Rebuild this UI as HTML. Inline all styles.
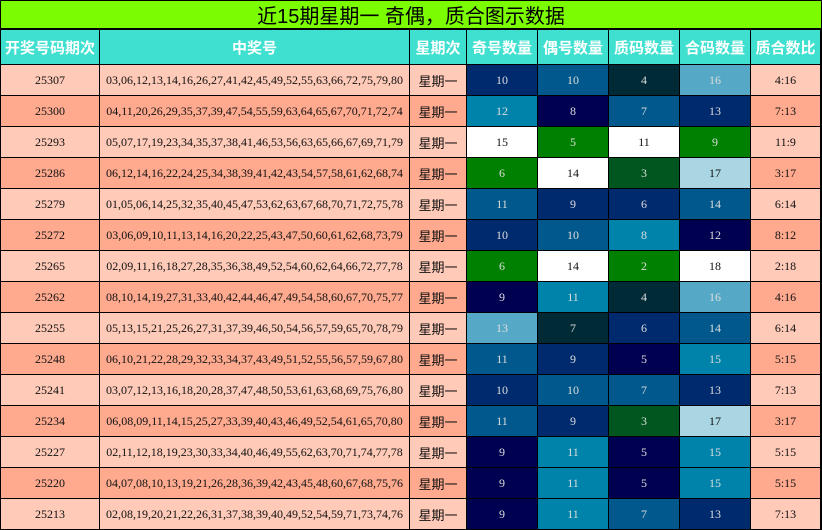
<!DOCTYPE html><html><head><meta charset="utf-8"><style>
body{margin:0;width:822px;height:530px;background:#000;position:relative;overflow:hidden;font-family:"Liberation Serif","Noto Serif CJK SC",serif}
.c{position:absolute;display:flex;align-items:center;justify-content:center;font-size:12px;color:#111;box-sizing:border-box}
.t{background:#7cfc00;font-family:"Liberation Sans","Noto Sans CJK SC",sans-serif;font-size:20px;color:#000}
.h{background:#40e0d0;color:#fff;font-family:"Liberation Sans","Noto Sans CJK SC",sans-serif;font-size:15px;font-weight:bold}
.wk{font-family:"Liberation Sans","Noto Sans CJK SC",sans-serif;font-size:13px}
</style></head><body>
<div class="c t" style="left:1px;top:1px;width:820px;height:27px">近15期星期一 奇偶，质合图示数据</div>
<div id="g"></div>
<script>
(function(){
var xs=[1,100,410,467,538,609,680,751,821];
var hd=["开奖号码期次","中奖号","星期次","奇号数量","偶号数量","质码数量","合码数量","质合数比"];
var g=document.getElementById('g'),h='';
for(var i=0;i<8;i++)h+='<div class="c h" style="left:'+xs[i]+'px;top:30px;width:'+(xs[i+1]-xs[i]-1)+'px;height:34px">'+hd[i]+'</div>';
var P={A:'#002a6e',B:'#00588c',C:'#002a36',D:'#55a8c6',E:'#0083aa',F:'#000050',W:'#ffffff',H:'#008000',I:'#00561e',J:'#aad6e3'};
var rows=[
["25307","03,06,12,13,14,16,26,27,41,42,45,49,52,55,63,66,72,75,79,80",10,10,4,16,"ABCD"],
["25300","04,11,20,26,29,35,37,39,47,54,55,59,63,64,65,67,70,71,72,74",12,8,7,13,"EFBA"],
["25293","05,07,17,19,23,34,35,37,38,41,46,53,56,63,65,66,67,69,71,79",15,5,11,9,"WHWH"],
["25286","06,12,14,16,22,24,25,34,38,39,41,42,43,54,57,58,61,62,68,74",6,14,3,17,"HWIJ"],
["25279","01,05,06,14,25,32,35,40,45,47,53,62,63,67,68,70,71,72,75,78",11,9,6,14,"BAAB"],
["25272","03,06,09,10,11,13,14,16,20,22,25,43,47,50,60,61,62,68,73,79",10,10,8,12,"ABEF"],
["25265","02,09,11,16,18,27,28,35,36,38,49,52,54,60,62,64,66,72,77,78",6,14,2,18,"HWHW"],
["25262","08,10,14,19,27,31,33,40,42,44,46,47,49,54,58,60,67,70,75,77",9,11,4,16,"FECD"],
["25255","05,13,15,21,25,26,27,31,37,39,46,50,54,56,57,59,65,70,78,79",13,7,6,14,"DCAB"],
["25248","06,10,21,22,28,29,32,33,34,37,43,49,51,52,55,56,57,59,67,80",11,9,5,15,"BAFE"],
["25241","03,07,12,13,16,18,20,28,37,47,48,50,53,61,63,68,69,75,76,80",10,10,7,13,"ABBA"],
["25234","06,08,09,11,14,15,25,27,33,39,40,43,46,49,52,54,61,65,70,80",11,9,3,17,"BAIJ"],
["25227","02,11,12,18,19,23,30,33,34,40,46,49,55,62,63,70,71,74,77,78",9,11,5,15,"FEFE"],
["25220","04,07,08,10,13,19,21,26,28,36,39,42,43,45,48,60,67,68,75,76",9,11,5,15,"FEFE"],
["25213","02,08,19,20,21,22,26,31,37,38,39,40,49,52,54,59,71,73,74,76",9,11,7,13,"FEBA"]];
for(var r=0;r<15;r++){var R=rows[r],ty=65+31*r,bg=r%2?'#ffaa8f':'#ffcab8';
var v=[R[0],R[1],'星期一',R[2],R[3],R[4],R[5],R[4]+':'+R[5]];
for(var i=0;i<8;i++){var b=bg,col='#111',cls='c';
if(i==2)cls+=' wk';
if(i>=3&&i<=6){var k=R[6][i-3];b=P[k];col=(k=='W'||k=='J')?'#111':'#ddd';}
h+='<div class="'+cls+'" style="left:'+xs[i]+'px;top:'+ty+'px;width:'+(xs[i+1]-xs[i]-1)+'px;height:30px;background:'+b+';color:'+col+'">'+v[i]+'</div>';}}
g.innerHTML=h;
})();
</script></body></html>
